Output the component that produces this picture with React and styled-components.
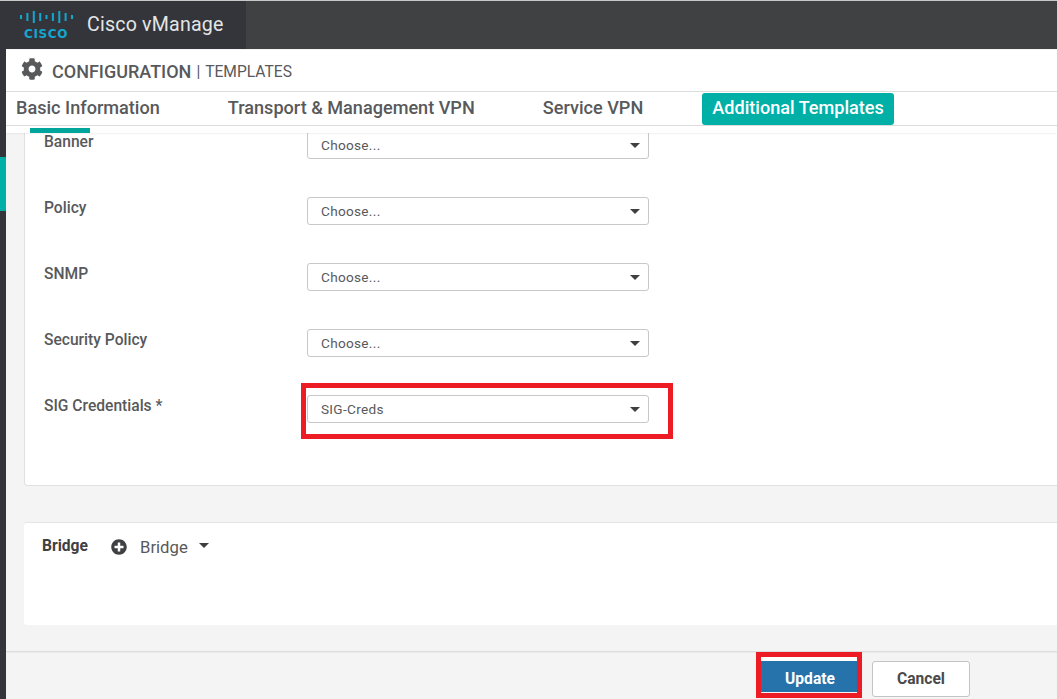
import React from 'react';
import styled, { createGlobalStyle } from 'styled-components';
import { FaCog, FaPlusCircle } from 'react-icons/fa';

const Global = createGlobalStyle`
  html, body {
    margin: 0;
    height: 699px;
    overflow: hidden;
    background: #f4f4f4;
    font-family: Roboto, "Liberation Sans", sans-serif;
  }
  * { box-sizing: border-box; }
`;

const Page = styled.div`
  position: relative;
  display: flex;
  flex-direction: column;
  width: 1057px;
  height: 699px;
  overflow: hidden;
  background: #f4f4f4;
  border-top: 1px solid #c9c9c9;
`;

const TopBar = styled.header`
  display: flex;
  flex: none;
  height: 48px;
  background: #404143;
`;

const Brand = styled.div`
  display: flex;
  align-items: center;
  gap: 14px;
  width: 246px;
  padding-left: 19px;
  background: #33353a;
`;

const LogoWrap = styled.div`
  display: flex;
  flex-direction: column;
  align-items: center;
  width: 54px;
`;

const LogoWord = styled.span`
  margin-top: 4px;
  font-family: "DejaVu Sans", sans-serif;
  font-size: 12px;
  line-height: 12px;
  font-weight: 700;
  letter-spacing: 0.6px;
  color: #14a6cf;
`;

const BrandName = styled.span`
  margin-top: -1px;
  font-size: 19.6px;
  color: #e4e5e6;
  letter-spacing: 0.2px;
`;

const Body = styled.div`
  display: flex;
  flex: 1;
  min-height: 0;
`;

const Rail = styled.aside`
  display: flex;
  flex-direction: column;
  flex: none;
  width: 6px;
  background: #33353a;
`;

const RailMark = styled.div`
  height: 54px;
  margin-top: 108px;
  background: #00b0a6;
`;

const Main = styled.main`
  display: flex;
  flex-direction: column;
  flex: 1;
  min-width: 0;
`;

const TitleBar = styled.div`
  display: flex;
  align-items: center;
  flex: none;
  height: 42px;
  margin-top: 1px;
  padding: 2px 0 0 15px;
  background: #fff;
  border-bottom: 1px solid #dcdcdc;
  color: #58595b;
`;

const TitleIcon = styled(FaCog)`
  width: 22px;
  height: 22px;
  margin-right: 9px;
  margin-top: -5px;
  color: #58595b;
`;

const TitleMain = styled.span`
  font-size: 18px;
  font-weight: 500;
`;

const TitleSub = styled.span`
  margin-left: 5px;
  font-size: 15.6px;
  &::before {
    content: "|";
    margin-right: 5px;
  }
`;

const TabBar = styled.nav`
  display: flex;
  align-items: center;
  flex: none;
  height: 34px;
  padding-left: 10px;
  background: #fff;
  border-bottom: 1px solid #dcdcdc;
`;

const Tab = styled.div`
  height: 32px;
  margin-left: ${(p) => p.$gap}px;
  padding: 0 ${(p) => (p.$active ? 10 : 0)}px;
  border-radius: 3px;
  font-size: 18.1px;
  font-weight: 500;
  line-height: 30px;
  white-space: nowrap;
  color: ${(p) => (p.$active ? '#fff' : '#58595b')};
  background: ${(p) => (p.$active ? '#00b0a6' : 'transparent')};
`;

const TabStrip = styled.div`
  flex: none;
  height: 7px;
  padding: 2px 0 0 24px;
  background: #fff;
  box-shadow: 0 1px 2px rgba(0, 0, 0, 0.06);
  position: relative;
  z-index: 2;
`;

const TabMarker = styled.div`
  width: 60px;
  height: 5px;
  background: #00a69c;
`;

const Scroll = styled.div`
  flex: 1;
  min-height: 0;
  padding-left: 18px;
`;

const FormCard = styled.section`
  height: 355px;
  background: #fff;
  border: 1px solid #e0e0e0;
  border-top: 0;
  border-right: 0;
  border-radius: 0 0 0 4px;
  padding-left: 19px;
`;

const Row = styled.div`
  display: flex;
  height: 66px;
  margin-top: ${(p) => (p.$first ? -2 : 0)}px;
`;

const FieldLabel = styled.label`
  width: 263px;
  margin-top: 1px;
  font-size: 15.6px;
  font-weight: 500;
  line-height: 20px;
  color: #58595b;
`;

const Select = styled.div`
  display: flex;
  align-items: center;
  justify-content: space-between;
  width: 342px;
  height: 28px;
  padding: 0 8px 0 13px;
  background: #fff;
  border: 1px solid #c8c8c8;
  border-radius: 3px;
  font-size: 13.6px;
  letter-spacing: 0.3px;
  color: #58595b;
`;

const Caret = styled.span`
  width: 0;
  height: 0;
  border-left: 5px solid transparent;
  border-right: 5px solid transparent;
  border-top: 5px solid #3f3f3f;
`;

const BridgeCard = styled.section`
  display: flex;
  align-items: flex-start;
  height: 103px;
  margin-top: 36px;
  padding: 14px 0 0 18px;
  background: #fff;
  border-top: 1px solid #e4e4e4;
  border-radius: 3px 0 0 3px;
`;

const BridgeTitle = styled.span`
  width: 69px;
  font-size: 15.6px;
  font-weight: 700;
  line-height: 18px;
  color: #3f4042;
`;

const AddIcon = styled(FaPlusCircle)`
  width: 16px;
  height: 16px;
  margin-top: 2px;
  color: #3f4042;
`;

const BridgeAdd = styled.span`
  margin: 1px 11px 0 13px;
  font-size: 16.7px;
  line-height: 20px;
  color: #58595b;
`;

const BridgeCaret = styled(Caret)`
  margin-top: 6px;
`;

const Footer = styled.footer`
  display: flex;
  justify-content: flex-end;
  flex: none;
  height: 48px;
  padding: 9px 87px 0 0;
  gap: 12px;
  border-top: 1px solid #dcdcdc;
  box-shadow: inset 0 1px 1px rgba(0, 0, 0, 0.04);
`;

const UpdateButton = styled.button`
  width: 100px;
  height: 35px;
  margin-top: -4px;
  padding: 5px 0 0;
  border: 0;
  border-top: 4px solid #fff;
  background: #2573aa;
  color: #fff;
  font: 700 15.6px Roboto, sans-serif;
`;

const CancelButton = styled.button`
  width: 98px;
  height: 36px;
  border: 1px solid #c4c4c4;
  border-radius: 3px;
  background: #fff;
  color: #4a4a4a;
  font: 700 15.6px Roboto, sans-serif;
`;

// red annotations laid over the screenshot
const Highlight = styled.div`
  position: absolute;
  left: ${(p) => p.$x}px;
  top: ${(p) => p.$y}px;
  width: ${(p) => p.$w}px;
  height: ${(p) => p.$h}px;
  border: 5px solid #ed1c24;
  pointer-events: none;
`;

const bars = [
  [2, 4], [8.4, 8], [14.8, 12], [21.2, 8], [27.5, 4], [33.9, 8], [40.3, 12], [46.6, 8], [53, 4],
];

const CiscoBars = () => (
  <svg width="56" height="14" viewBox="0 0 56 14">
    {bars.map(([x, h]) => (
      <rect key={x} x={x} y={7 - h / 2} width="2" height={h} fill="#14a6cf" />
    ))}
  </svg>
);

const fields = [
  { label: 'Banner', value: 'Choose...' },
  { label: 'Policy', value: 'Choose...' },
  { label: 'SNMP', value: 'Choose...' },
  { label: 'Security Policy', value: 'Choose...' },
  { label: 'SIG Credentials *', value: 'SIG-Creds' },
];

const App = () => (
  <Page>
    <Global />
    <TopBar>
      <Brand>
        <LogoWrap>
          <CiscoBars />
          <LogoWord>CISCO</LogoWord>
        </LogoWrap>
        <BrandName>Cisco vManage</BrandName>
      </Brand>
    </TopBar>
    <Body>
      <Rail>
        <RailMark />
      </Rail>
      <Main>
        <TitleBar>
          <TitleIcon />
          <TitleMain>CONFIGURATION</TitleMain>
          <TitleSub>TEMPLATES</TitleSub>
        </TitleBar>
        <TabBar>
          <Tab $gap={0}>Basic Information</Tab>
          <Tab $gap={68}>Transport &amp; Management VPN</Tab>
          <Tab $gap={68}>Service VPN</Tab>
          <Tab $gap={59} $active>Additional Templates</Tab>
        </TabBar>
        <TabStrip>
          <TabMarker />
        </TabStrip>
        <Scroll>
          <FormCard>
            {fields.map((f, i) => (
              <Row key={f.label} $first={i === 0}>
                <FieldLabel>{f.label}</FieldLabel>
                <Select>
                  {f.value}
                  <Caret />
                </Select>
              </Row>
            ))}
          </FormCard>
          <BridgeCard>
            <BridgeTitle>Bridge</BridgeTitle>
            <AddIcon />
            <BridgeAdd>Bridge</BridgeAdd>
            <BridgeCaret />
          </BridgeCard>
        </Scroll>
        <Footer>
          <UpdateButton>Update</UpdateButton>
          <CancelButton>Cancel</CancelButton>
        </Footer>
      </Main>
    </Body>
    <Highlight $x={301} $y={382} $w={372} $h={56} />
    <Highlight $x={756} $y={651} $w={106} $h={46} />
  </Page>
);

export default App;
